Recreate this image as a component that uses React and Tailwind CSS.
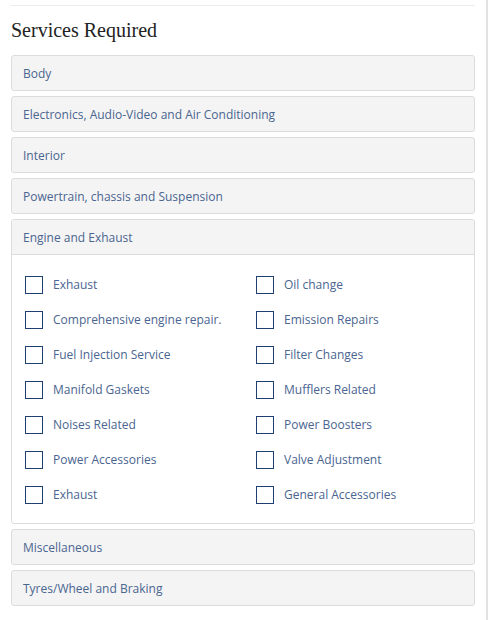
import React from "react";

const groups = [
  "Body",
  "Electronics, Audio-Video and Air Conditioning",
  "Interior",
  "Powertrain, chassis and Suspension",
];

const services = [
  ["Exhaust", "Oil change"],
  ["Comprehensive engine repair.", "Emission Repairs"],
  ["Fuel Injection Service", "Filter Changes"],
  ["Manifold Gaskets", "Mufflers Related"],
  ["Noises Related", "Power Boosters"],
  ["Power Accessories", "Valve Adjustment"],
  ["Exhaust", "General Accessories"],
];

function PanelHead({ title }) {
  return (
    <div className="h-[36px] flex items-center pt-[2px] px-[11px] bg-[#f4f4f4] border border-[#dcdcdc] rounded-[3px] text-[12px] text-[#4a6590]">
      {title}
    </div>
  );
}

function Check({ label }) {
  return (
    <label className="flex items-center h-[35px] gap-[10px]">
      <span className="w-[18px] h-[18px] border border-[#1e3f6f] bg-white shrink-0"></span>
      <span className="text-[12px] text-[#4a6590]">{label}</span>
    </label>
  );
}

export default function App() {
  return (
    <div className="w-[488px] min-h-[620px] bg-white border-r-2 border-[#e2e2e2] font-['Open_Sans',sans-serif]">
      <div className="pl-[11px] pr-[11px] pt-[5px]">
        <div className="border-t border-[#ececec]"></div>
        <h2 className="mt-[10px] mb-[11px] text-[20px] leading-[28px] text-[#222] font-['Liberation_Serif',serif]">
          Services Required
        </h2>
        <div className="flex flex-col gap-[5px]">
          {groups.map((g) => (
            <PanelHead key={g} title={g} />
          ))}
          <div className="border border-[#dcdcdc] rounded-[3px] overflow-hidden">
            <div className="h-[35px] flex items-center pt-[2px] px-[11px] bg-[#f4f4f4] border-b border-[#dcdcdc] text-[12px] text-[#4a6590]">
              Engine and Exhaust
            </div>
            <div className="pt-[12px] pb-[11px] pl-[13px] flex">
              <div className="w-[231px]">
                {services.map(([a], i) => (
                  <Check key={i} label={a} />
                ))}
              </div>
              <div>
                {services.map(([, b], i) => (
                  <Check key={i} label={b} />
                ))}
              </div>
            </div>
          </div>
          <PanelHead title="Miscellaneous" />
          <PanelHead title="Tyres/Wheel and Braking" />
        </div>
      </div>
    </div>
  );
}
